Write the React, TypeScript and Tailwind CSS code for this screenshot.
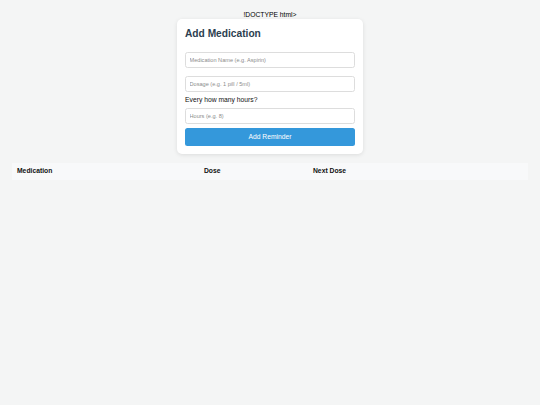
export default function App() {
  const font = { fontFamily: '"Liberation Sans", Arial, sans-serif' };
  return (
    <div className="min-h-[405px] w-full bg-[#f4f5f5] text-black" style={font}>
      <div className="flex flex-col items-center pt-[11px]">
        <div className="h-[8px] text-[6.75px] leading-[8px]">!DOCTYPE html&gt;</div>
        <div className="w-[186px] rounded-[5px] bg-white px-[8px] pb-[8px] pt-[9px] shadow-[0_1px_4px_rgba(0,0,0,0.1)]">
          <h2 className="text-[10.2px] font-bold leading-[12px] text-[#2c3e50]">Add Medication</h2>
          <div className="mt-[12px] flex flex-col">
            <input
              className="h-[16px] w-full rounded-[2.5px] border border-[#dddddd] px-[3.5px] text-[5.6px] outline-none placeholder:text-[#8c8c8c]"
              placeholder="Medication Name (e.g. Aspirin)"
            />
            <input
              className="mt-[8px] h-[16px] w-full rounded-[2.5px] border border-[#dddddd] px-[3.5px] text-[5.6px] outline-none placeholder:text-[#8c8c8c]"
              placeholder="Dosage (e.g. 1 pill / 5ml)"
            />
            <label className="mt-[3px] text-[6.75px] leading-[10px] text-[#111]">Every how many hours?</label>
            <input
              className="mt-[3px] h-[16px] w-full rounded-[2.5px] border border-[#dddddd] px-[3.5px] text-[5.6px] outline-none placeholder:text-[#8c8c8c]"
              placeholder="Hours (e.g. 8)"
            />
            <button className="mt-[4px] h-[17.5px] w-full rounded-[2.5px] bg-[#3498db] text-[6.75px] text-white">
              Add Reminder
            </button>
          </div>
        </div>
      </div>
      <div className="mx-[12px] mt-[9px] grid h-[17.5px] grid-cols-[187px_109px_1fr] items-center bg-[#f8f9fa] text-[6.75px] font-bold text-[#111]">
        <div className="pl-[5px]">Medication</div>
        <div className="pl-[5px]">Dose</div>
        <div className="pl-[5px]">Next Dose</div>
      </div>
    </div>
  );
}
